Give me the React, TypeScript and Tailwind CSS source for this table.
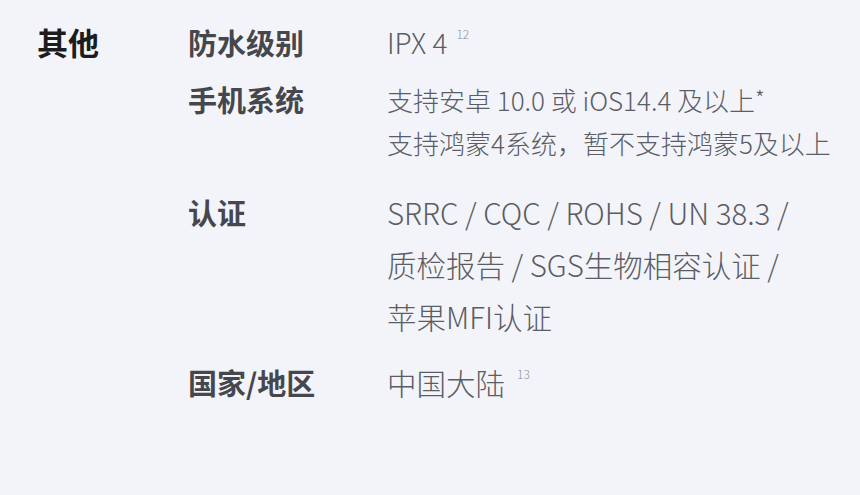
const font = { fontFamily: '"Noto Sans CJK SC", "Noto Sans", sans-serif' };

interface SpecRow {
  label: string;
  lines: React.ReactNode[];
  lh: string;
  size: string;
  mt: string;
}

const rows: SpecRow[] = [
  {
    label: '防水级别',
    lines: [
      <>
        IPX 4<sup className="ml-[9px] align-top text-[12px] leading-none relative top-[8px] text-[#8e9097]">12</sup>
      </>,
    ],
    lh: 'leading-[44px]',
    size: 'text-[28px]',
    mt: 'mt-[20px]',
  },
  {
    label: '手机系统',
    lines: [
      <>
        支持安卓 10.0 或 iOS14.4 及以上
        <span className="align-top relative top-[8px] text-[22px] leading-none">*</span>
      </>,
      '支持鸿蒙4系统，暂不支持鸿蒙5及以上',
    ],
    lh: 'leading-[43px]',
    size: 'text-[26px]',
    mt: 'mt-[14px]',
  },
  {
    label: '认证',
    lines: ['SRRC / CQC / ROHS / UN 38.3 /', '质检报告 / SGS生物相容认证 /', '苹果MFI认证'],
    lh: 'leading-[52px]',
    size: 'text-[29.5px]',
    mt: 'mt-[22px]',
  },
  {
    label: '国家/地区',
    lines: [
      <>
        中国大陆<sup className="ml-[12px] align-top text-[12px] leading-none relative top-[12px] text-[#8e9097]">13</sup>
      </>,
    ],
    lh: 'leading-[52px]',
    size: 'text-[29.5px]',
    mt: 'mt-[14px]',
  },
];

export default function App() {
  return (
    <div className="w-[860px] h-[495px] bg-[#f3f4f9] overflow-hidden" style={font}>
      <div className="flex pl-[37px]">
        <div className="w-[151px] pt-[20px] text-[31px] leading-[44px] font-bold text-[#1c1c1e]">其他</div>
        <div className="flex flex-col">
          {rows.map((row) => (
            <div key={row.label} className={`flex ${row.mt}`}>
              <div className={`w-[199px] shrink-0 text-[29px] font-bold text-[#46474c] ${row.lh}`}>{row.label}</div>
              <div className={`flex flex-col font-light text-[#5b5d64] whitespace-nowrap ${row.size} ${row.lh}`}>
                {row.lines.map((line, i) => (
                  <div key={i}>{line}</div>
                ))}
              </div>
            </div>
          ))}
        </div>
      </div>
    </div>
  );
}
